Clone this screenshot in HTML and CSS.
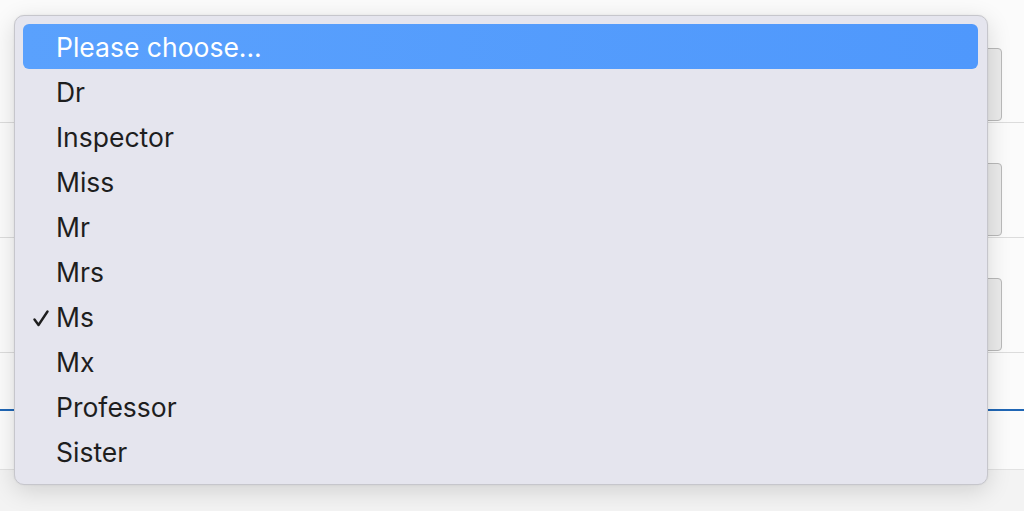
FILE: index.html
```html
<!DOCTYPE html>
<html>
<head>
<meta charset="utf-8">
<link rel="stylesheet" href="styles.css">
</head>
<body>
<div class="page">
  <div class="form">
    <div class="row"><div class="field"></div></div>
    <div class="row"><div class="field"></div></div>
    <div class="row"><div class="field"></div></div>
    <div class="blue-rule"></div>
  </div>
  <div class="footer"></div>

  <div class="menu">
    <div class="item active">Please choose...</div>
    <div class="item">Dr</div>
    <div class="item">Inspector</div>
    <div class="item">Miss</div>
    <div class="item">Mr</div>
    <div class="item">Mrs</div>
    <div class="item checked"><svg class="check" width="16" height="17" viewBox="0 0 16 17"><polyline points="1.5,9.5 5.5,15 14.5,1.5" fill="none" stroke="#1e1e1e" stroke-width="2.4" stroke-linecap="round" stroke-linejoin="round"/></svg>Ms</div>
    <div class="item">Mx</div>
    <div class="item">Professor</div>
    <div class="item">Sister</div>
  </div>
</div>
</body>
</html>
```
FILE: styles.css
```css
html, body {
  margin: 0;
  padding: 0;
}
body {
  width: 1024px;
  height: 511px;
  overflow: hidden;
  background: #fbfbfb;
  font-family: "Inter", "Liberation Sans", sans-serif;
}
.page {
  position: relative;
  width: 1024px;
  height: 511px;
  display: flex;
  flex-direction: column;
}
.form {
  padding-top: 8px;
  height: 469px;
  box-sizing: border-box;
  display: flex;
  flex-direction: column;
}
.row {
  height: 115px;
  flex: none;
  box-sizing: border-box;
  border-bottom: 1px solid #dcdcdc;
  display: flex;
  justify-content: flex-end;
  padding-top: 40px;
  padding-right: 22px;
}
.field {
  width: 60px;
  height: 73px;
  border: 1px solid #b9b9b9;
  border-radius: 4px;
  background: #ebebeb;
  box-sizing: border-box;
}
.blue-rule {
  margin-top: 56px;
  height: 2px;
  background: #1f66b5;
}
.footer {
  flex: 1;
  border-top: 1px solid #e2e2e2;
  background: #f3f3f3;
}
.menu {
  position: absolute;
  left: 14px;
  top: 15px;
  width: 974px;
  height: 470px;
  box-sizing: border-box;
  padding: 8px 9px 10px 8px;
  background: #e5e5ee;
  border: 1px solid #c6c6cc;
  border-radius: 10px;
  box-shadow: 0 6px 24px rgba(0,0,0,0.14), 0 0 2px rgba(0,0,0,0.08);
  display: flex;
  flex-direction: column;
}
.item {
  height: 45px;
  line-height: 46px;
  padding-left: 33px;
  font-size: 26.5px;
  color: #1e1e1e;
  border-radius: 6px;
  position: relative;
  white-space: nowrap;
}
.item.active {
  background: linear-gradient(90deg, #5aa1fd, #4f98fc);
  color: #ffffff;
}
.check {
  position: absolute;
  left: 10px;
  top: 16px;
}
```
